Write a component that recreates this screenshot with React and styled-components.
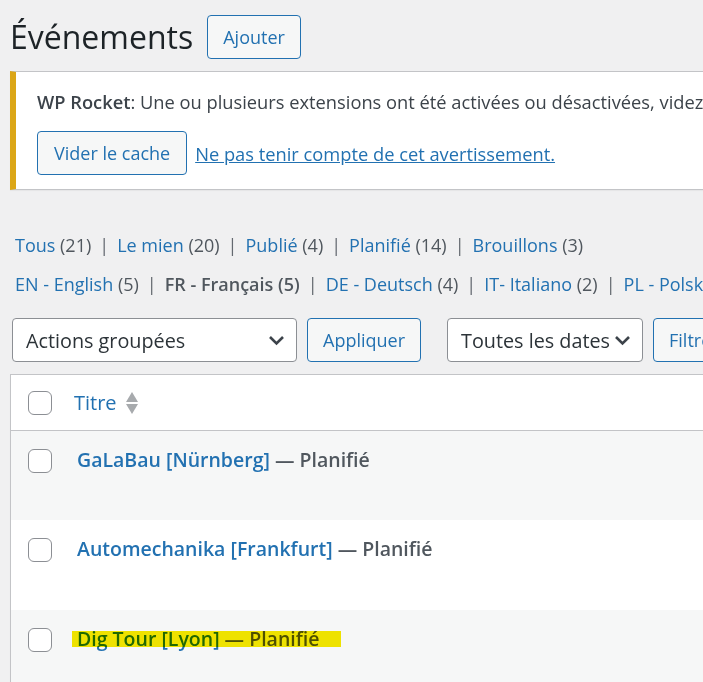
import React from 'react';
import styled, { createGlobalStyle } from 'styled-components';

const GlobalStyle = createGlobalStyle`
  body {
    margin: 0;
    background: #f0f0f1;
    overflow: hidden;
    font-family: "Open Sans", "Noto Sans", sans-serif;
    color: #3c434a;
  }
`;

const Page = styled.div`
  width: 1200px;
  padding-left: 10px;
`;

const Header = styled.div`
  display: flex;
  align-items: center;
  gap: 14px;
  padding-top: 15px;
`;

const Title = styled.h1`
  margin: 0;
  font-size: 32px;
  font-weight: 400;
  line-height: 44px;
  color: #1d2327;
`;

const Button = styled.button`
  height: 44px;
  padding: 0 ${({ $pad = 15 }) => $pad}px;
  font-family: inherit;
  font-size: 18px;
  color: #2271b1;
  background: #f6f7f7;
  border: 1px solid #2271b1;
  border-radius: 4px;
  white-space: nowrap;
`;

const Notice = styled.div`
  margin-top: 12px;
  background: #fff;
  border: 1px solid #c3c4c7;
  border-left: 6px solid #dba617;
  box-shadow: 0 1px 1px rgba(0, 0, 0, 0.04);
  padding: 15px 21px 14px;
`;

const NoticeText = styled.p`
  margin: 0;
  font-size: 18.3px;
  line-height: 29px;
  white-space: nowrap;
  strong { font-weight: 600; }
`;

const NoticeActions = styled.div`
  display: flex;
  align-items: center;
  gap: 8px;
  margin-top: 15px;
`;

const Link = styled.a`
  font-size: 18.3px;
  color: #2271b1;
  text-decoration: underline;
  white-space: nowrap;
`;

const Views = styled.ul`
  margin: ${({ $first }) => ($first ? '36px' : '0')} 0 0;
  padding: 0 0 0 5px;
  list-style: none;
  font-size: 18px;
  line-height: 39px;
  white-space: nowrap;
`;

const View = styled.li`
  display: inline;
  color: #50575e;
`;

const ViewLink = styled.a`
  color: ${({ $current }) => ($current ? '#50575e' : '#2271b1')};
  font-weight: ${({ $current }) => ($current ? 600 : 400)};
  text-decoration: none;
`;

const Count = styled.span`
  color: #50575e;
`;

const Sep = styled.span`
  color: #646970;
  margin: 0 8px;
`;

const Tablenav = styled.div`
  display: flex;
  align-items: center;
  margin-top: 14px;
  padding-left: 2px;
  height: 44px;
`;

const Select = styled.div`
  display: flex;
  align-items: center;
  justify-content: space-between;
  box-sizing: border-box;
  width: ${({ $w }) => $w}px;
  height: 44px;
  padding: 0 11px 0 13px;
  background: #fff;
  border: 1px solid #8c8f94;
  border-radius: 4px;
  font-size: 19.8px;
  color: #2c3338;
  white-space: nowrap;
  margin-right: 10px;
`;

const Group = styled.div`
  display: flex;
  align-items: center;
  margin-right: ${({ $gap }) => $gap}px;
`;

const Table = styled.div`
  margin-top: 12px;
  background: #fff;
  border: 1px solid #c3c4c7;
  box-shadow: 0 1px 1px rgba(0, 0, 0, 0.04);
`;

const HeadRow = styled.div`
  display: flex;
  align-items: center;
  height: 55px;
  padding-left: 17px;
  border-bottom: 1px solid #c3c4c7;
`;

const Row = styled.div`
  display: flex;
  align-items: flex-start;
  height: ${({ $h }) => $h}px;
  padding-left: 17px;
  background: ${({ $striped }) => ($striped ? '#f6f7f7' : '#fff')};
`;

const Check = styled.span`
  flex: none;
  box-sizing: border-box;
  width: 24px;
  height: 24px;
  border: 1px solid #8c8f94;
  border-radius: 6px;
  background: #fff;
  margin-top: ${({ $top = 0 }) => $top}px;
`;

const HeadTitle = styled.a`
  display: flex;
  align-items: center;
  gap: 8px;
  margin-left: 22px;
  font-size: 20px;
  color: #2271b1;
  text-decoration: none;
`;

const RowTitle = styled.div`
  margin: 14px 0 0 25px;
  font-size: 19.5px;
  line-height: 30px;
  font-weight: 600;
  color: #50575e;
  white-space: nowrap;
`;

const TitleLink = styled.a`
  color: #2271b1;
  text-decoration: none;
`;

const Highlight = styled.span`
  position: relative;
  &::after {
    content: '';
    position: absolute;
    left: -5px;
    right: -22px;
    top: 6px;
    bottom: 5px;
    background: #f7ea00;
    mix-blend-mode: multiply;
    pointer-events: none;
  }
`;

const Chevron = () => (
  <svg width="17" height="11" viewBox="0 0 17 11">
    <path d="M2 2l6.5 6.5L15 2" fill="none" stroke="#3c434a" strokeWidth="2.6" />
  </svg>
);

const SortIcon = () => (
  <svg width="14" height="24" viewBox="0 0 14 24">
    <path d="M7 1l6 10H1z" fill="#a7aaad" />
    <path d="M1 13h12l-6 10z" fill="#a7aaad" />
  </svg>
);

const views = [
  [['Tous', 21], ['Le mien', 20], ['Publié', 4], ['Planifié', 14], ['Brouillons', 3]],
  [['EN - English', 5], ['FR - Français', 5, true], ['DE - Deutsch', 4], ['IT- Italiano', 2], ['PL - Polski', 3]],
];

const rows = [
  { title: 'GaLaBau [Nürnberg]', h: 89, striped: true },
  { title: 'Automechanika [Frankfurt]', h: 90, striped: false },
  { title: 'Dig Tour [Lyon]', h: 90, striped: true, marked: true },
];

export default function App() {
  return (
    <Page>
      <GlobalStyle />
      <Header>
        <Title>Événements</Title>
        <Button type="button">Ajouter</Button>
      </Header>

      <Notice>
        <NoticeText>
          <strong>WP Rocket</strong>: Une ou plusieurs extensions ont été activées ou désactivées, videz le cache si elles affectent l’affichage de votre site.
        </NoticeText>
        <NoticeActions>
          <Button type="button" $pad={16}>Vider le cache</Button>
          <Link href="#">Ne pas tenir compte de cet avertissement.</Link>
        </NoticeActions>
      </Notice>

      {views.map((list, i) => (
        <Views key={i} $first={i === 0}>
          {list.map(([label, n, current], j) => (
            <View key={label}>
              {j > 0 && <Sep>|</Sep>}
              <ViewLink href="#" $current={current}>
                {label} <Count>({n})</Count>
              </ViewLink>
            </View>
          ))}
        </Views>
      ))}

      <Tablenav>
        <Group $gap={26}>
          <Select $w={285}>
            Actions groupées <Chevron />
          </Select>
          <Button type="button">Appliquer</Button>
        </Group>
        <Group $gap={0}>
          <Select $w={196}>
            Toutes les dates <Chevron />
          </Select>
          <Button type="button">Filtrer</Button>
        </Group>
      </Tablenav>

      <Table>
        <HeadRow>
          <Check />
          <HeadTitle href="#">
            Titre <SortIcon />
          </HeadTitle>
        </HeadRow>
        {rows.map((r) => {
          const content = (
            <>
              <TitleLink href="#">{r.title}</TitleLink> — Planifié
            </>
          );
          return (
            <Row key={r.title} $h={r.h} $striped={r.striped}>
              <Check $top={18} />
              <RowTitle>{r.marked ? <Highlight>{content}</Highlight> : content}</RowTitle>
            </Row>
          );
        })}
      </Table>
    </Page>
  );
}
